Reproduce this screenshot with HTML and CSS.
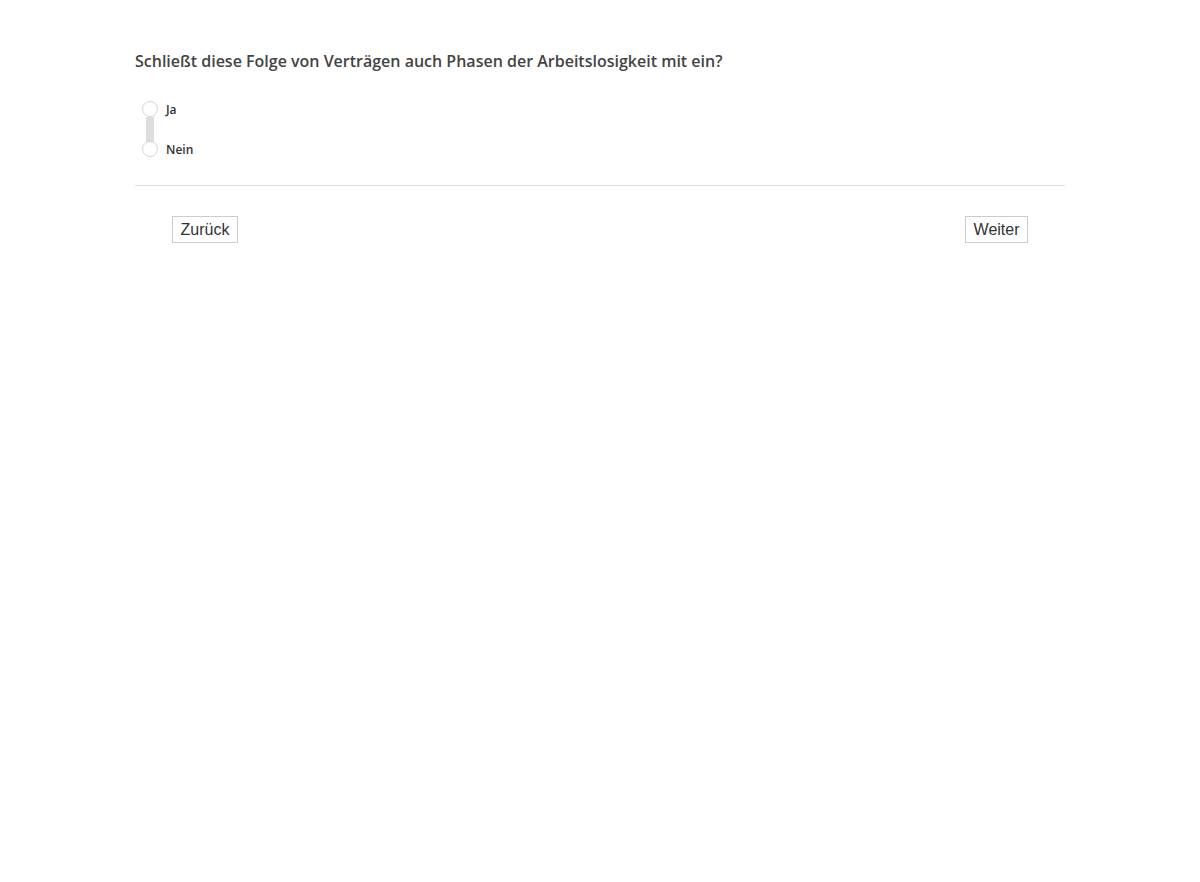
FILE: index.html
```html
<!DOCTYPE html>
<html lang="de">
<head>
    <meta charset="UTF-8">
    <meta name="viewport" content="width=device-width, initial-scale=1.0">
    <title>Fragebogen</title>
    <link rel="stylesheet" href="styles.css">
</head>
<body>
    <div class="container">
        <h2 class="question">Schließt diese Folge von Verträgen auch Phasen der Arbeitslosigkeit mit ein?</h2>
        <div class="choices">
            <div class="choice-track"></div>
            <label class="choice">
                <input type="radio" name="answer" value="ja">
                <span class="dot"></span>
                <span class="choice-label">Ja</span>
            </label>
            <label class="choice">
                <input type="radio" name="answer" value="nein">
                <span class="dot"></span>
                <span class="choice-label">Nein</span>
            </label>
        </div>
        <div class="nav">
            <button class="nav-button">Zurück</button>
            <button class="nav-button">Weiter</button>
        </div>
    </div>
</body>
</html>
```

FILE: styles.css
```css
/* General styling */
body {
    font-family: "Open Sans", sans-serif;
    background-color: #fff;
    color: #444;
    margin: 0;
    padding: 0;
}

.container {
    width: 930px;
    margin: 0 auto;
    padding-top: 50px;
}

.question {
    font-size: 16px;
    font-weight: 600;
    line-height: 22px;
    margin: 0 0 29px 0;
    color: #444;
}

/* Radio list */
.choices {
    position: relative;
    padding-left: 7px;
    padding-bottom: 28px;
    border-bottom: 1px solid #e0e0e0;
}

.choice-track {
    position: absolute;
    left: 11px;
    top: 16px;
    width: 8px;
    height: 25px;
    background-color: #ddd;
}

.choice {
    position: relative;
    display: flex;
    align-items: center;
    height: 16px;
    margin-bottom: 24px;
    cursor: pointer;
}

.choice:last-child {
    margin-bottom: 0;
}

.choice input {
    display: none;
}

.dot {
    width: 14px;
    height: 14px;
    border: 1px solid #d6d6d6;
    border-radius: 50%;
    background-color: #fff;
    flex-shrink: 0;
}

.choice-label {
    margin-left: 8px;
    font-size: 12px;
    font-weight: 600;
    color: #333;
}

/* Navigation */
.nav {
    display: flex;
    justify-content: space-between;
    padding: 30px 37px 0 37px;
}

.nav-button {
    font-family: "Liberation Sans", Arial, sans-serif;
    font-size: 16px;
    color: #333;
    background-color: #fff;
    border: 1px solid #ccc;
    padding: 3px 7.5px;
    height: 27px;
    line-height: 19px;
    cursor: pointer;
}
```
